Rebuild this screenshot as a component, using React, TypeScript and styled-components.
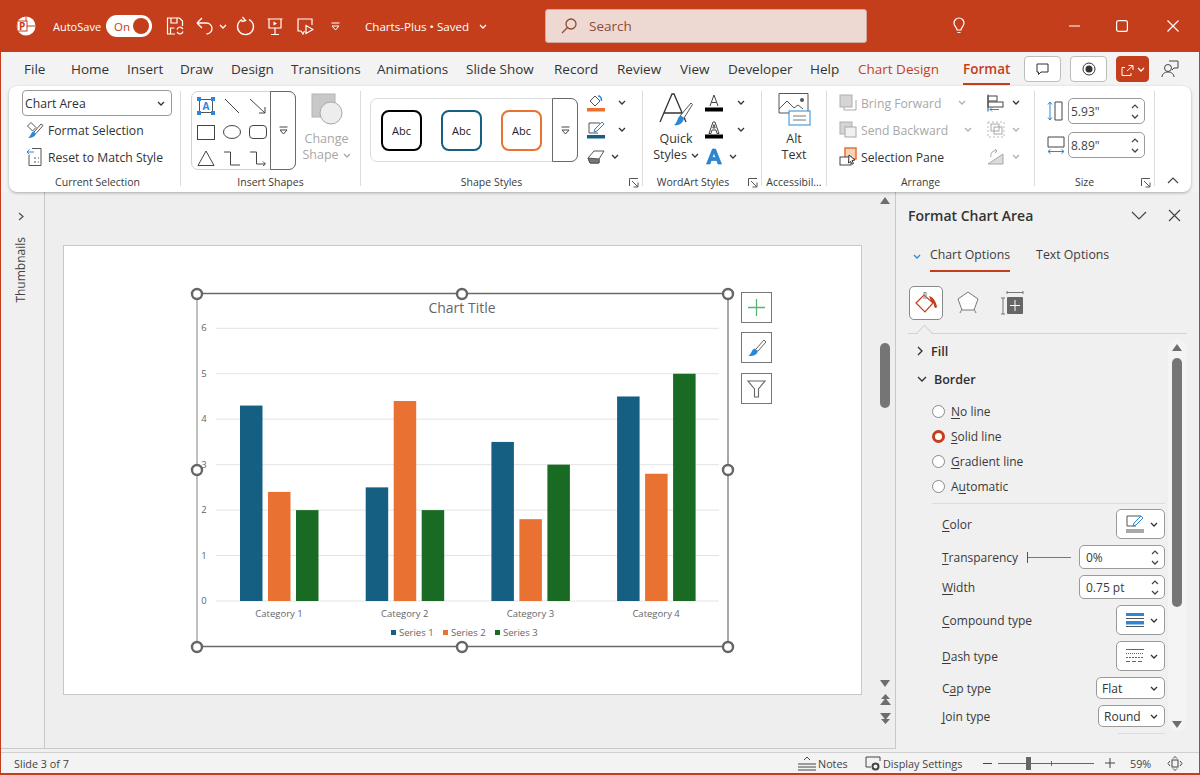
import React from "react";
import styled, { createGlobalStyle } from "styled-components";

const RED = "#c43e1c";
const BLUE = "#2b88d8";
const ORANGE = "#e97132";
const TEAL = "#156082";
const GREEN = "#196b24";

const GlobalStyle = createGlobalStyle`
  html, body { margin: 0; padding: 0; }
  body { font-family: "Open Sans", "Noto Sans", sans-serif; color: #2f2f2f; }
  * { box-sizing: border-box; }
  svg { flex: none; }
`;

const Window = styled.div`
  width: 1200px;
  height: 775px;
  overflow: hidden;
  display: flex;
  flex-direction: column;
  background: #f3f3f3;
`;

const TitleBar = styled.div`
  height: 52px;
  flex: none;
  display: flex;
  align-items: center;
  background: ${RED};
  color: #fff;
`;

const Slot = styled.div<{ $w: number; $c?: string }>`
  width: ${(p) => p.$w}px;
  flex: none;
  display: flex;
  align-items: center;
  justify-content: center;
  color: ${(p) => p.$c ?? "inherit"};
`;

const AutoSave = styled.div`
  width: 54px;
  flex: none;
  padding-left: 1px;
  font-size: 11px;
`;

const Toggle = styled.div`
  width: 46px;
  height: 22px;
  flex: none;
  margin-right: 6px;
  padding: 0 3px 0 8px;
  border-radius: 11px;
  background: #fff;
  color: ${RED};
  font-size: 11.5px;
  display: flex;
  align-items: center;
  justify-content: space-between;
  &::after {
    content: "";
    width: 16px;
    height: 16px;
    border-radius: 50%;
    background: ${RED};
  }
`;

const DocTitle = styled.div`
  width: 195px;
  flex: none;
  padding-left: 15px;
  font-size: 11.6px;
  display: flex;
  align-items: center;
  gap: 10px;
`;

const Search = styled.div`
  width: 322px;
  height: 34px;
  flex: none;
  border: 1px solid #d3a79b;
  border-radius: 3px;
  background: #eed8d2;
  color: #8f4a36;
  font-size: 13.5px;
  display: flex;
  align-items: center;
  gap: 12px;
  padding-left: 15px;
`;

const Spacer = styled.div`
  flex: 1;
`;

const Body = styled.div`
  flex: 1;
  min-height: 0;
  display: flex;
  flex-direction: column;
  border: solid ${RED};
  border-width: 0 1px 2px;
`;

const TabRow = styled.div`
  height: 34px;
  flex: none;
  display: flex;
  align-items: center;
  padding-left: 23px;
`;

const Tab = styled.div<{ $w: number; $accent?: boolean; $active?: boolean }>`
  width: ${(p) => p.$w}px;
  flex: none;
  height: 34px;
  display: flex;
  align-items: center;
  font-size: 13.5px;
  white-space: nowrap;
  color: ${(p) => (p.$accent ? RED : "#333")};
  font-weight: ${(p) => (p.$active ? 600 : 400)};
`;

const ActiveLabel = styled.span`
  position: relative;
  &::after {
    content: "";
    position: absolute;
    left: 0;
    right: 0;
    bottom: -7px;
    height: 2px;
    background: ${RED};
  }
`;

const TopButton = styled.div<{ $w: number; $filled?: boolean }>`
  width: ${(p) => p.$w}px;
  height: 26px;
  flex: none;
  margin-right: 9px;
  border: 1px solid ${(p) => (p.$filled ? RED : "#bdbdbd")};
  border-radius: 4px;
  background: ${(p) => (p.$filled ? RED : "#fff")};
  color: ${(p) => (p.$filled ? "#fff" : "#333")};
  display: flex;
  align-items: center;
  justify-content: center;
  gap: 3px;
`;

const Ribbon = styled.div`
  height: 106px;
  flex: none;
  margin: 0 8px;
  position: relative;
  z-index: 2;
  display: flex;
  border-radius: 8px;
  background: #fff;
  box-shadow: 0 1px 3px rgba(0, 0, 0, 0.3);
  font-size: 12.2px;
`;

const Sep = styled.div`
  width: 1px;
  flex: none;
  margin: 5px 0 6px;
  background: #dcdcdc;
`;

const Group = styled.div<{ $w: number }>`
  width: ${(p) => p.$w}px;
  flex: none;
  position: relative;
  display: flex;
  flex-direction: column;
`;

const GroupBody = styled.div<{ $pl: number }>`
  flex: 1;
  display: flex;
  padding: 4px 0 0 ${(p) => p.$pl}px;
`;

const GroupLabel = styled.div<{ $pl?: number; $pr?: number }>`
  height: 16px;
  margin-bottom: 2px;
  padding: 0 ${(p) => p.$pr ?? 0}px 0 ${(p) => p.$pl ?? 0}px;
  font-size: 10.5px;
  line-height: 16px;
  text-align: center;
  white-space: nowrap;
  color: #3a3a3a;
`;

const Launcher = styled.div`
  position: absolute;
  right: 3px;
  bottom: 4px;
  color: #555;
  display: flex;
`;

const Combo = styled.div`
  width: 150px;
  height: 26px;
  padding: 0 6px 0 2px;
  border: 1px solid #9a9a9a;
  border-radius: 4px;
  display: flex;
  align-items: center;
  justify-content: space-between;
`;

const Stack = styled.div`
  display: flex;
  flex-direction: column;
`;

const RowStack = styled(Stack)<{ $ml?: number }>`
  margin: -1px 0 0 ${(p) => p.$ml ?? 0}px;
`;

const CmdRow = styled.div<{ $pl?: number; $disabled?: boolean; $gap?: number }>`
  height: 27px;
  display: flex;
  align-items: center;
  gap: ${(p) => p.$gap ?? 4}px;
  padding-left: ${(p) => p.$pl ?? 0}px;
  white-space: nowrap;
  color: ${(p) => (p.$disabled ? "#a8a8a8" : "#333")};
`;

const CmdText = styled.span<{ $w?: number }>`
  width: ${(p) => (p.$w ? `${p.$w}px` : "auto")};
  padding-top: 2px;
`;

const ShapeGallery = styled.div`
  width: 105px;
  height: 79px;
  flex: none;
  margin-top: 1px;
  display: flex;
  border: 1px solid #d2d2d2;
  border-radius: 7px;
`;

const ShapeGrid = styled.div`
  width: 78px;
  padding: 1px 0 0 1px;
  display: grid;
  grid-template-columns: repeat(3, 26px);
  grid-auto-rows: 26px;
  justify-items: center;
  align-items: center;
  color: #444;
`;

const Expander = styled.div<{ $w: number }>`
  width: ${(p) => p.$w}px;
  flex: none;
  align-self: stretch;
  margin: -1px -1px -1px auto;
  border: 1px solid #6a6a6a;
  border-radius: 0 7px 7px 0;
  display: flex;
  align-items: center;
  justify-content: center;
  color: #444;
`;

const BigButton = styled.div<{ $w: number; $ml?: number; $disabled?: boolean }>`
  width: ${(p) => p.$w}px;
  flex: none;
  margin-left: ${(p) => p.$ml ?? 0}px;
  padding-top: 1px;
  display: flex;
  flex-direction: column;
  align-items: center;
  line-height: 16px;
  color: ${(p) => (p.$disabled ? "#a8a8a8" : "#333")};
  font-size: 12.5px;
`;

const BigIcon = styled.div`
  height: 36px;
  margin-bottom: 4px;
  display: flex;
  align-items: center;
`;

const BigLine = styled.div`
  display: flex;
  align-items: center;
  gap: 4px;
  white-space: nowrap;
`;

const StyleGallery = styled.div`
  width: 208px;
  height: 64px;
  flex: none;
  margin-top: 8px;
  padding-left: 10px;
  display: flex;
  align-items: center;
  border: 1px solid #dcdcdc;
  border-radius: 7px;
`;

const StyleChip = styled.div<{ $c: string }>`
  width: 41px;
  height: 41px;
  flex: none;
  border: 2px solid ${(p) => p.$c};
  border-radius: 8px;
  display: flex;
  align-items: center;
  justify-content: center;
  font-size: 11px;
  color: #222;
  & + & {
    margin-left: 19px;
  }
`;

const SpinBox = styled.div<{ $w: number; $h: number }>`
  width: ${(p) => p.$w}px;
  height: ${(p) => p.$h}px;
  flex: none;
  padding: 0 5px 0 ${(p) => (p.$h > 25 ? 2 : 6)}px;
  border: 1px solid #9a9a9a;
  border-radius: 5px;
  background: #fff;
  display: flex;
  align-items: center;
  justify-content: space-between;
  font-size: 12px;
`;

const SpinArrows = styled.div`
  display: flex;
  flex-direction: column;
  gap: 5px;
  color: #444;
`;

const SizeStack = styled(Stack)`
  margin-top: 8px;
`;

const SizeRow = styled.div`
  display: flex;
  align-items: center;
  gap: 3px;
  margin-bottom: 8px;
  color: #444;
`;

const Collapse = styled.div`
  flex: 1;
  display: flex;
  align-items: flex-end;
  justify-content: center;
  padding: 0 0 8px;
  color: #444;
`;

const Workspace = styled.div`
  flex: 1;
  min-height: 0;
  display: flex;
  background: #f0f0f0;
`;

const Rail = styled.div`
  width: 44px;
  height: 557px;
  flex: none;
  padding: 20px 4px 0 0;
  display: flex;
  flex-direction: column;
  align-items: center;
  gap: 16px;
  border: solid #c8c8c8;
  border-width: 0 1px 1px 0;
  color: #555;
`;

const RailLabel = styled.div`
  writing-mode: vertical-rl;
  transform: rotate(180deg);
  font-size: 12px;
  color: #444;
`;

const Canvas = styled.div`
  width: 851px;
  height: 557px;
  flex: none;
  display: flex;
  background: #eeeeee;
  border: solid #c8c8c8;
  border-width: 0 1px 1px 0;
`;

const SlideArea = styled.div`
  flex: 1;
  padding: 53px 0 0 18px;
`;

const Slide = styled.div`
  width: 799px;
  height: 450px;
  position: relative;
  background: #fff;
  border: 1px solid #c8c8c8;
`;

const ChartFrame = styled.svg`
  position: absolute;
  left: 126px;
  top: 40px;
`;

const ChartButton = styled.div<{ $top: number }>`
  position: absolute;
  left: 677px;
  top: ${(p) => p.$top}px;
  width: 31px;
  height: 31px;
  border: 1px solid #777;
  background: #fff;
  display: flex;
  align-items: center;
  justify-content: center;
`;

const CanvasScroll = styled.div`
  width: 20px;
  flex: none;
  display: flex;
  flex-direction: column;
  align-items: center;
  color: #6e6e6e;
`;

const ScrollThumb = styled.div<{ $h: number; $mt: number }>`
  width: 10px;
  height: ${(p) => p.$h}px;
  flex: none;
  margin-top: ${(p) => p.$mt}px;
  border-radius: 5px;
  background: #757575;
`;

const ScrollArrow = styled.svg<{ $mt: number }>`
  display: block;
  margin-top: ${(p) => p.$mt}px;
`;

const Pane = styled.div`
  flex: 1;
  display: flex;
  flex-direction: column;
  background: #f0f0f0;
`;

const PaneHeader = styled.div`
  height: 48px;
  flex: none;
  padding: 0 0 2px 12px;
  display: flex;
  align-items: center;
  font-size: 14px;
  font-weight: 600;
  color: #333;
`;

const PaneIconSlot = styled.div<{ $w: number; $ml?: string }>`
  width: ${(p) => p.$w}px;
  margin-left: ${(p) => p.$ml ?? "0"};
  display: flex;
  justify-content: center;
  color: #444;
`;

const PaneTabs = styled.div`
  height: 33px;
  flex: none;
  padding-left: 17px;
  display: flex;
  align-items: flex-start;
  font-size: 12.3px;
`;

const PaneTab = styled.div<{ $active?: boolean; $ml?: number }>`
  height: 32px;
  margin-left: ${(p) => p.$ml ?? 0}px;
  padding-top: 6px;
  white-space: nowrap;
  color: #3d3d3d;
  border-bottom: 2px solid ${(p) => (p.$active ? RED : "transparent")};
`;

const PaneChevron = styled.div`
  width: 17px;
  padding-top: 14px;
  display: flex;
  align-items: flex-start;
`;

const PaneIcons = styled.div`
  height: 61px;
  flex: none;
  margin: 0 12px;
  padding: 13px 0 0 1px;
  display: flex;
  align-items: flex-start;
  position: relative;
  border-bottom: 1px solid #d4d4d4;
  &::after {
    content: "";
    position: absolute;
    left: 11px;
    bottom: -5px;
    width: 10px;
    height: 10px;
    background: #f0f0f0;
    border: solid #d4d4d4;
    border-width: 1px 0 0 1px;
    transform: rotate(45deg);
  }
`;

const FillTab = styled.div`
  width: 34px;
  height: 34px;
  flex: none;
  border: 1px solid #8a8a8a;
  border-radius: 5px;
  background: #fff;
  display: flex;
  align-items: center;
  justify-content: center;
`;

const PlainTab = styled.div<{ $w: number }>`
  width: ${(p) => p.$w}px;
  height: 34px;
  flex: none;
  display: flex;
  align-items: center;
  justify-content: center;
`;

const PaneBody = styled.div`
  flex: 1;
  min-height: 0;
  display: flex;
  overflow: hidden;
`;

const PaneContent = styled.div`
  width: 272px;
  flex: none;
  padding: 3px 3px 0 12px;
  font-size: 12px;
  color: #3a3a3a;
`;

const SectionHead = styled.div`
  height: 28px;
  padding-left: 9px;
  display: flex;
  align-items: center;
  gap: 7px;
  font-weight: 600;
  font-size: 12.5px;
  color: #2f2f2f;
`;

const RadioList = styled.div`
  padding: 6px 0 0 24px;
`;

const RadioRow = styled.div`
  height: 25px;
  display: flex;
  align-items: center;
  gap: 6px;
`;

const RadioDot = styled.div<{ $on?: boolean }>`
  width: 13px;
  height: 13px;
  flex: none;
  border-radius: 50%;
  background: #fff;
  border: ${(p) => (p.$on ? `3.5px solid ${RED}` : "1px solid #8a8a8a")};
`;

const Key = styled.span`
  text-decoration: underline;
  text-underline-offset: 2px;
`;

const Divider = styled.div`
  height: 1px;
  margin: 4px 0 5px 24px;
  background: #dcdcdc;
`;

const PropRows = styled.div`
  padding-left: 34px;
  display: flex;
  flex-direction: column;
  gap: 6px;
`;

const PropRow = styled.div`
  display: flex;
  align-items: center;
  justify-content: space-between;
`;

const PropLabel = styled.span`
  padding-top: 1px;
`;

const PickButton = styled.div<{ $w: number; $h: number; $pl?: number }>`
  width: ${(p) => p.$w}px;
  height: ${(p) => p.$h}px;
  flex: none;
  padding: 0 6px 0 ${(p) => p.$pl ?? 9}px;
  border: 1px solid #9a9a9a;
  border-radius: 5px;
  background: #fff;
  display: flex;
  align-items: center;
  justify-content: space-between;
  color: #333;
`;

const SliderGroup = styled.div`
  display: flex;
  align-items: center;
  gap: 8px;
`;

const NextCtl = styled.div`
  width: 47px;
  height: 6px;
  margin: 0 0 0 auto;
  border-top: 1px solid #dcdcdc;
`;

const PaneScroll = styled.div`
  width: 18px;
  height: 393px;
  flex: none;
  margin-top: 5px;
  padding-top: 3px;
  border-radius: 9px;
  background: #f4f4f4;
  display: flex;
  flex-direction: column;
  align-items: center;
  color: #6e6e6e;
`;

const StatusBar = styled.div`
  height: 21px;
  flex: none;
  padding-left: 13px;
  border-top: 1px solid #d0d0d0;
  display: flex;
  align-items: center;
  font-size: 10.8px;
  color: #444;
  background: #f3f3f3;
`;

const StatusItem = styled.div<{ $w: number; $pl?: number }>`
  width: ${(p) => p.$w}px;
  flex: none;
  padding-left: ${(p) => p.$pl ?? 0}px;
  display: flex;
  align-items: center;
  gap: 2px;
  white-space: nowrap;
`;

const ZoomTrack = styled.div`
  width: 96px;
  height: 1px;
  flex: none;
  margin: 0 11px 0 6px;
  position: relative;
  background: #666;
  &::before {
    content: "";
    position: absolute;
    left: 28px;
    top: -6px;
    width: 5px;
    height: 13px;
    background: #666;
  }
  &::after {
    content: "";
    position: absolute;
    left: 53px;
    top: -2px;
    width: 1px;
    height: 5px;
    background: #666;
  }
`;

type IcProps = { w: number; h: number; children?: React.ReactNode; sw?: number };

const Ic = ({ w, h, sw = 1, children }: IcProps) => (
  <svg width={w} height={h} viewBox={`0 0 ${w} ${h}`} fill="none" stroke="currentColor" strokeWidth={sw}>
    {children}
  </svg>
);

const Chev = ({ c = "#333" }: { c?: string }) => (
  <svg width="8" height="5" viewBox="0 0 8 5" fill="none" stroke={c} strokeWidth="1.3">
    <path d="M1 1l3 3 3-3" />
  </svg>
);

const Up = () => (
  <svg width="8" height="5" viewBox="0 0 8 5" fill="none" stroke="currentColor" strokeWidth="1.2">
    <path d="M1 4l3-3 3 3" />
  </svg>
);

const Corner = () => (
  <Ic w={10} h={10}>
    <path d="M.5 8V.5H9M3 3l5.5 5.5M4.5 9H9V4.5" />
  </Ic>
);

const MoreGlyph = () => (
  <Ic w={9} h={9}>
    <path d="M.5 1h8" />
    <path d="M1 4h7L4.5 8z" />
  </Ic>
);

const Logo = () => (
  <svg width="20" height="20" viewBox="0 0 20 20">
    <circle cx="10" cy="10" r="9.5" fill="#fff" />
    <path d="M10 .5V10h9.500" fill="none" stroke={RED} strokeWidth="1" />
    <rect x="1" y="5" width="10" height="10" fill="#fff" stroke={RED} strokeWidth="1" />
    <text x="3" y="13.5" fontSize="10" fontWeight="700" fontFamily="Open Sans" fill={RED}>P</text>
  </svg>
);

const ArrowUp = ({ mt }: { mt: number }) => (
  <ScrollArrow $mt={mt} width="10" height="7" viewBox="0 0 10 7"><path d="M5 0l5 7H0z" fill="currentColor" /></ScrollArrow>
);

const ArrowDown = ({ mt }: { mt: number }) => (
  <ScrollArrow $mt={mt} width="10" height="7" viewBox="0 0 10 7"><path d="M5 7L0 0h10z" fill="currentColor" /></ScrollArrow>
);

const shapes = [
  <Ic key="t" w={18} h={18}><rect x="2.5" y="2.5" width="13" height="13" stroke="#555" /><path d="M0 0h4v4H0zM14 0h4v4h-4zM0 14h4v4H0zM14 14h4v4h-4z" fill={BLUE} stroke="none" /><text x="5.5" y="13" fontSize="10" fontWeight="700" fill={BLUE} stroke="none" fontFamily="Open Sans">A</text></Ic>,
  <Ic key="l" w={16} h={16}><path d="M1 1l14 14" /></Ic>,
  <Ic key="a" w={18} h={16}><path d="M1 1l15 14M10 15h6V9" /></Ic>,
  <Ic key="r" w={18} h={15}><rect x=".5" y=".5" width="17" height="14" /></Ic>,
  <Ic key="e" w={18} h={14}><ellipse cx="9" cy="7" rx="8.5" ry="6.5" /></Ic>,
  <Ic key="rr" w={18} h={14}><rect x=".5" y=".5" width="17" height="13" rx="3.5" /></Ic>,
  <Ic key="tr" w={18} h={16}><path d="M9 1l8 14.5H1z" /></Ic>,
  <Ic key="el" w={18} h={15}><path d="M1 1h6.5v13H17" /></Ic>,
  <Ic key="ea" w={18} h={15}><path d="M1 1h6.5v12H16M14 10.5l2.500 2.500-2.500 2" /></Ic>,
];

const categories = ["Category 1", "Category 2", "Category 3", "Category 4"];
const values = [
  [4.3, 2.4, 2],
  [2.5, 4.4, 2],
  [3.5, 1.8, 3],
  [4.5, 2.8, 5],
];
const seriesColors = [TEAL, ORANGE, GREEN];
const yOf = (v: number) => 601 - 45.45 * v;

const Chart = () => (
  <ChartFrame width={545} height={368} viewBox="190 286 545 368">
    {[0, 1, 2, 3, 4, 5, 6].map((v) => (
      <g key={v}>
        <line x1="216" x2="719" y1={yOf(v)} y2={yOf(v)} stroke="#e3e3e3" strokeWidth="1" />
        <text x="204" y={yOf(v) + 3} fontSize="9.5" textAnchor="middle" fill="#666" fontFamily="Open Sans">{v}</text>
      </g>
    ))}
    {values.map((set, c) =>
      set.map((v, s) => (
        <rect key={`${c}-${s}`} x={240 + c * 125.7 + s * 28} y={yOf(v)} width={22.5} height={45.45 * v} fill={seriesColors[s]} />
      ))
    )}
    {categories.map((name, c) => (
      <text key={name} x={279 + c * 125.7} y={617} fontSize="9.5" textAnchor="middle" fill="#666" fontFamily="Open Sans">{name}</text>
    ))}
    <text x="462" y="313" fontSize="14" textAnchor="middle" fill="#666" fontFamily="Open Sans">Chart Title</text>
    {[0, 1, 2].map((s) => (
      <g key={s}>
        <rect x={391 + s * 52} y={630} width={5} height={5} fill={seriesColors[s]} />
        <text x={399 + s * 52} y={636} fontSize="9.5" fill="#666" fontFamily="Open Sans">{`Series ${s + 1}`}</text>
      </g>
    ))}
    <path d="M197 293.5H728M197 646.5H728" stroke="#6a6a6a" strokeWidth="1.5" />
    <path d="M197 293V647" stroke="#ababab" strokeWidth="1.5" />
    <path d="M728 293V647" stroke="#8a8a8a" strokeWidth="1.5" />
    {[[197, 294], [462, 294], [728, 294], [197, 470], [728, 470], [197, 647], [462, 647], [728, 647]].map(([x, y]) => (
      <circle key={`${x}-${y}`} cx={x} cy={y} r="5" fill="#fff" stroke="#666" strokeWidth="2.4" />
    ))}
  </ChartFrame>
);

export default function App() {
  return (
    <Window>
      <GlobalStyle />
      <TitleBar>
        <Slot $w={52}><Logo /></Slot>
        <AutoSave>AutoSave</AutoSave>
        <Toggle>On</Toggle>
        <Slot $w={34}>
          <Ic w={18} h={18} sw={1.2}>
            <path d="M9 17H1.5V1h12l3 3v5M5 1v5h6V1M4.5 17v-6h4" />
            <path d="M11 12.5a3 3 0 015-1.5l1 1M17 14.500a3 3 0 01-5 1.500l-1-1" />
          </Ic>
        </Slot>
        <Slot $w={24}>
          <Ic w={17} h={19} sw={1.3}><path d="M1 6h9.500a5.500 5.500 0 010 11M1 6l5-5M1 6l5 5" /></Ic>
        </Slot>
        <Slot $w={14}><Chev c="#fff" /></Slot>
        <Slot $w={30}>
          <Ic w={19} h={20} sw={1.3}><path d="M6 3.500a8 8 0 107 0M6.500 1l3 3.500-4 1" /></Ic>
        </Slot>
        <Slot $w={30}>
          <Ic w={16} h={17} sw={1.2}><path d="M.5 1h15M2 1v9h12V1M8 10v6M4 16.500h8" /><path d="M6.500 3.500L10 5.500l-3.500 2z" fill="#fff" stroke="none" /></Ic>
        </Slot>
        <Slot $w={30}>
          <Ic w={17} h={17} sw={1.2}><path d="M4 13H1V1h14v6" /><path d="M4 13l2 3 1.500-3M9 7.500l7 4-7 4z" /></Ic>
        </Slot>
        <Slot $w={30}><MoreGlyph /></Slot>
        <DocTitle>
          Charts-Plus • Saved
          <Chev c="#fff" />
        </DocTitle>
        <Search>
          <Ic w={16} h={16} sw={1.3}>
            <circle cx="10" cy="6" r="5" />
            <path d="M6.500 9.500L1 15" />
          </Ic>
          Search
        </Search>
        <Spacer />
        <Slot $w={40}>
          <Ic w={12} h={18} sw={1.2}><path d="M4 13c0-3-3-3.500-3-7a5 5 0 0110 0c0 3.500-3 4-3 7zM4.500 15.500h3" /></Ic>
        </Slot>
        <Spacer />
        <Slot $w={47}><Ic w={11} h={2}><path d="M0 1h11" /></Ic></Slot>
        <Slot $w={48}><Ic w={12} h={12} sw={1.2}><rect x=".6" y=".6" width="10.8" height="10.8" rx="2" /></Ic></Slot>
        <Slot $w={54}><Ic w={12} h={12} sw={1.2}><path d="M.5.5l11 11M11.500.5l-11 11" /></Ic></Slot>
      </TitleBar>

      <Body>
        <TabRow>
          <Tab $w={47}>File</Tab>
          <Tab $w={56}>Home</Tab>
          <Tab $w={53}>Insert</Tab>
          <Tab $w={51}>Draw</Tab>
          <Tab $w={60}>Design</Tab>
          <Tab $w={86}>Transitions</Tab>
          <Tab $w={89}>Animations</Tab>
          <Tab $w={88}>Slide Show</Tab>
          <Tab $w={63}>Record</Tab>
          <Tab $w={63}>Review</Tab>
          <Tab $w={48}>View</Tab>
          <Tab $w={82}>Developer</Tab>
          <Tab $w={48}>Help</Tab>
          <Tab $w={105} $accent>Chart Design</Tab>
          <Tab $w={61} $accent $active><ActiveLabel>Format</ActiveLabel></Tab>
          <TopButton $w={37}>
            <Ic w={13} h={13}><path d="M1 1h11v8H5l-2.500 2.500V9H1z" /></Ic>
          </TopButton>
          <TopButton $w={37}>
            <Ic w={14} h={14}><circle cx="7" cy="7" r="6" /><circle cx="7" cy="7" r="3.5" fill="#333" stroke="none" /></Ic>
          </TopButton>
          <TopButton $w={33} $filled>
            <Ic w={13} h={13}><path d="M7.500 2.500H12V7M12 2.500L6 8M4 4.500H1v8h9V10" /></Ic>
            <Chev c="#fff" />
          </TopButton>
          <Slot $w={24} $c="#444">
            <Ic w={18} h={18}><circle cx="7" cy="8" r="3.5" /><path d="M1 17c0-3 2.500-5 6-5s6 2 6 5M8 1h9v7h-4l-2 2" /></Ic>
          </Slot>
        </TabRow>

        <Ribbon>
          <Group $w={171}>
            <GroupBody $pl={13}>
              <Stack>
                <Combo>Chart Area<Chev /></Combo>
                <CmdRow $pl={4}>
                  <Ic w={18} h={18}>
                    <path d="M1.500 5L5 1.500l5 5-3.500 3.500z" stroke="#555" />
                    <path d="M8 11l7-8 2 1.500-7 8" stroke="#555" />
                    <path d="M2 17c3.500 0 7-1 8-4.500L7.500 10.500C5 11 5 15 2 17z" fill={BLUE} stroke="none" />
                  </Ic>
                  <CmdText>Format Selection</CmdText>
                </CmdRow>
                <CmdRow $pl={4}>
                  <Ic w={18} h={20}><path d="M6 1.500h9v17H3V8" stroke="#555" /><path d="M1 5h7M3.500 2.500L1 5l2.500 2.500" stroke={BLUE} /><path d="M8 11h2M12 11h1M8 15h2M12 15h1" stroke="#555" /></Ic>
                  <CmdText>Reset to Match Style</CmdText>
                </CmdRow>
              </Stack>
            </GroupBody>
            <GroupLabel $pl={6}>Current Selection</GroupLabel>
          </Group>
          <Sep />

          <Group $w={179}>
            <GroupBody $pl={10}>
              <ShapeGallery>
                <ShapeGrid>{shapes}</ShapeGrid>
                <Expander $w={26}><MoreGlyph /></Expander>
              </ShapeGallery>
              <BigButton $w={43} $ml={9} $disabled>
                <BigIcon>
                  <svg width="32" height="32" viewBox="0 0 32 32">
                    <rect x="1" y="1" width="23" height="23" fill="#c8c8c8" stroke="#b4b4b4" />
                    <circle cx="20" cy="20" r="11" fill="#ededed" stroke="#a8a8a8" />
                  </svg>
                </BigIcon>
                <BigLine>Change</BigLine>
                <BigLine>Shape<Chev c="#a8a8a8" /></BigLine>
              </BigButton>
            </GroupBody>
            <GroupLabel>Insert Shapes</GroupLabel>
          </Group>
          <Sep />

          <Group $w={281}>
            <GroupBody $pl={9}>
              <StyleGallery>
                <StyleChip $c="#000">Abc</StyleChip>
                <StyleChip $c={TEAL}>Abc</StyleChip>
                <StyleChip $c={ORANGE}>Abc</StyleChip>
                <Expander $w={26}><MoreGlyph /></Expander>
              </StyleGallery>
              <RowStack $ml={9}>
                <CmdRow $gap={13}>
                  <Ic w={18} h={18}>
                    <path d="M3 7l5-5 5 5-5 5z" stroke="#555" />
                    <path d="M11 2c2 0 3.500 2 3.500 5" stroke={BLUE} strokeWidth="1.5" />
                    <rect x="0" y="14" width="18" height="3.5" fill={ORANGE} stroke="none" />
                  </Ic>
                  <Chev />
                </CmdRow>
                <CmdRow $gap={13}>
                  <Ic w={18} h={18}>
                    <path d="M13 2H2v10h9" stroke="#555" />
                    <path d="M7 11l1-3 7-7 2 2-7 7z" stroke={BLUE} fill="#fff" />
                    <rect x="0" y="14" width="18" height="3.5" fill={TEAL} stroke="none" />
                  </Ic>
                  <Chev />
                </CmdRow>
                <CmdRow $gap={6}>
                  <Ic w={18} h={16}>
                    <path d="M1 9l6-7h10l-5 8v4H3z" stroke="#555" />
                    <path d="M1 9l2 5h9v-4z" fill="#777" stroke="#555" />
                  </Ic>
                  <Chev />
                </CmdRow>
              </RowStack>
            </GroupBody>
            <GroupLabel $pr={20}>Shape Styles</GroupLabel>
            <Launcher><Corner /></Launcher>
          </Group>
          <Sep />

          <Group $w={118}>
            <GroupBody $pl={12}>
              <BigButton $w={42}>
                <BigIcon>
                  <svg width="36" height="34" viewBox="0 0 36 34" fill="none">
                    <path d="M2 30L14 2h2l12 28M6 21h20" stroke="#333" strokeWidth="1.3" />
                    <path d="M22 24L33 11l1.500 1.500L26 26" stroke="#555" fill="#fff" />
                    <path d="M16 33c4 1 9-1 10-7l-3-2.500c-4 1-3 7-7 9.500z" fill={BLUE} />
                  </svg>
                </BigIcon>
                <BigLine>Quick</BigLine>
                <BigLine>Styles<Chev /></BigLine>
              </BigButton>
              <RowStack $ml={8}>
                <CmdRow $gap={14}>
                  <svg width="18" height="18" viewBox="0 0 18 18" fill="none">
                    <path d="M5 12L9 1l4 11M6.500 8.500h5" stroke="#444" />
                    <rect x="0" y="13.5" width="18" height="4" fill="#000" />
                  </svg>
                  <Chev />
                </CmdRow>
                <CmdRow $gap={14}>
                  <svg width="18" height="18" viewBox="0 0 18 18" fill="none">
                    <path d="M4 12.500L8 1h2l4 11.500h-2L11 9H7l-1 3.500zM7.800 7h2.400L9 3.500z" stroke="#444" />
                    <rect x="0" y="13.5" width="18" height="4" fill="#000" />
                  </svg>
                  <Chev />
                </CmdRow>
                <CmdRow $gap={6}>
                  <svg width="18" height="17" viewBox="0 0 18 17">
                    <path d="M1.500 16L7.500 1h3l6 15h-3.500l-1.200-3.500H6.200L5 16zM7.300 9.500h3.400L9 4.500z" fill={BLUE} stroke="#1a6bb0" strokeWidth=".6" />
                  </svg>
                  <Chev />
                </CmdRow>
              </RowStack>
            </GroupBody>
            <GroupLabel $pr={18}>WordArt Styles</GroupLabel>
            <Launcher><Corner /></Launcher>
          </Group>
          <Sep />

          <Group $w={64}>
            <GroupBody $pl={0}>
              <BigButton $w={64}>
                <BigIcon>
                  <svg width="33" height="34" viewBox="0 0 33 34" fill="none">
                    <path d="M1 1.500h29V21H1z" stroke="#555" />
                    <path d="M1 17l8-8 7 7 4-3 5 4" stroke="#555" />
                    <circle cx="24" cy="8" r="2" fill="#555" />
                    <rect x="11" y="19" width="21" height="14" fill="#fff" stroke={BLUE} />
                    <path d="M15 24h13M15 28h13" stroke="#777" />
                  </svg>
                </BigIcon>
                <BigLine>Alt</BigLine>
                <BigLine>Text</BigLine>
              </BigButton>
            </GroupBody>
            <GroupLabel>Accessibil...</GroupLabel>
          </Group>
          <Sep />

          <Group $w={207}>
            <GroupBody $pl={12}>
              <RowStack>
                <CmdRow $disabled>
                  <svg width="18" height="17" viewBox="0 0 18 17" fill="none">
                    <path d="M5 6v10h12V6" stroke="#a8a8a8" />
                    <rect x="1" y="1" width="12" height="12" fill="#d4d4d4" stroke="#b0b0b0" />
                  </svg>
                  <CmdText $w={93}>Bring Forward</CmdText>
                  <Chev c="#b0b0b0" />
                </CmdRow>
                <CmdRow $disabled>
                  <svg width="18" height="17" viewBox="0 0 18 17" fill="none">
                    <rect x="1" y="1" width="12" height="12" fill="#d4d4d4" stroke="#b0b0b0" />
                    <rect x="6" y="6" width="11" height="10" fill="#f0f0f0" stroke="#a8a8a8" />
                  </svg>
                  <CmdText $w={99}>Send Backward</CmdText>
                  <Chev c="#b0b0b0" />
                </CmdRow>
                <CmdRow>
                  <svg width="18" height="19" viewBox="0 0 18 19" fill="none">
                    <rect x="6" y="1" width="11" height="11" fill="#f7d2b8" stroke={ORANGE} strokeWidth="1.5" />
                    <rect x="1" y="10" width="11" height="8" fill="#fff" stroke="#444" />
                    <path d="M10 8l6 5-3 .5 1.500 3-1.500.7-1.500-3-2 2z" fill="#fff" stroke="#333" />
                  </svg>
                  <CmdText>Selection Pane</CmdText>
                </CmdRow>
              </RowStack>
              <RowStack $ml={15}>
                <CmdRow $gap={7}>
                  <svg width="18" height="18" viewBox="0 0 18 18" fill="none">
                    <path d="M1 .5v17" stroke="#444" />
                    <rect x="1" y="2" width="9" height="5" stroke="#444" />
                    <rect x="1" y="8" width="15" height="5" stroke="#444" />
                    <path d="M3 15.500h9M3 15.500l2-2M3 15.500l2 2" stroke={BLUE} />
                  </svg>
                  <Chev />
                </CmdRow>
                <CmdRow $gap={7}>
                  <svg width="18" height="17" viewBox="0 0 18 17" fill="none">
                    <path d="M1 1h16v15H1z" stroke="#bbb" strokeDasharray="2 2" />
                    <rect x="4" y="3" width="8" height="7" stroke="#a8a8a8" />
                    <rect x="7" y="6" width="8" height="7" stroke="#a8a8a8" />
                  </svg>
                  <Chev c="#b0b0b0" />
                </CmdRow>
                <CmdRow $gap={7}>
                  <svg width="18" height="17" viewBox="0 0 18 17" fill="none">
                    <path d="M1 16L16 6v10z" fill="#dcdcdc" stroke="#a8a8a8" />
                    <path d="M4 9c-1-4 2-7 6-6M8 1l2 2-2 2" stroke="#a8a8a8" />
                  </svg>
                  <Chev c="#b0b0b0" />
                </CmdRow>
              </RowStack>
            </GroupBody>
            <GroupLabel $pr={20}>Arrange</GroupLabel>
          </Group>
          <Sep />

          <Group $w={119}>
            <GroupBody $pl={12}>
              <SizeStack>
                <SizeRow>
                  <svg width="18" height="20" viewBox="0 0 18 20" fill="none">
                    <path d="M3 1v18M1 3.500L3 1l2 2.500M1 16.500L3 19l2-2.500" stroke={BLUE} />
                    <path d="M8 1h7v18H8z" stroke="#444" />
                  </svg>
                  <SpinBox $w={77} $h={26}>
                    5.93"
                    <SpinArrows><Up /><Chev c="#444" /></SpinArrows>
                  </SpinBox>
                </SizeRow>
                <SizeRow>
                  <svg width="18" height="20" viewBox="0 0 18 20" fill="none">
                    <path d="M1 2h16v10H1z" stroke="#444" />
                    <path d="M1 16.500h16M3.500 14.500L1 16.500l2.500 2M14.500 14.500l2.500 2-2.500 2" stroke={BLUE} />
                  </svg>
                  <SpinBox $w={77} $h={26}>
                    8.89"
                    <SpinArrows><Up /><Chev c="#444" /></SpinArrows>
                  </SpinBox>
                </SizeRow>
              </SizeStack>
            </GroupBody>
            <GroupLabel $pr={20}>Size</GroupLabel>
            <Launcher><Corner /></Launcher>
          </Group>
          <Sep />
          <Collapse>
            <Ic w={12} h={7} sw={1.2}><path d="M1 6l5-5 5 5" /></Ic>
          </Collapse>
        </Ribbon>

        <Workspace>
          <Rail>
            <Ic w={6} h={9} sw={1.3}><path d="M1 1l4 3.500L1 8" /></Ic>
            <RailLabel>Thumbnails</RailLabel>
          </Rail>
          <Canvas>
            <SlideArea>
              <Slide>
                <Chart />
                <ChartButton $top={46}>
                  <Ic w={19} h={19}><path d="M9.500 1v17M1 9.500h17" stroke="#5cb270" strokeWidth="1.3" /></Ic>
                </ChartButton>
                <ChartButton $top={86}>
                  <Ic w={20} h={20}>
                    <path d="M9 11l8-9 2 2-8 9" stroke="#666" fill="#fff" />
                    <path d="M1 18c4 .5 9-.5 10-5l-3-2.500C4 11.500 5 16 1 18z" fill={BLUE} stroke="none" />
                  </Ic>
                </ChartButton>
                <ChartButton $top={127}>
                  <Ic w={19} h={19} sw={1.1}><path d="M1 2h17L11.500 10v8h-4v-8z" stroke="#666" /></Ic>
                </ChartButton>
              </Slide>
            </SlideArea>
            <CanvasScroll>
              <ArrowUp mt={5} />
              <ScrollThumb $h={65} $mt={139} />
              <ArrowDown mt={272} />
              <ScrollArrow $mt={7} width="11" height="12" viewBox="0 0 11 12"><path d="M5.500 0L10 5H1zM5.500 4L11 11H0z" fill="currentColor" /></ScrollArrow>
              <ScrollArrow $mt={6} width="11" height="12" viewBox="0 0 11 12"><path d="M5.500 12L1 7h9zM5.500 8L0 1h11z" fill="currentColor" /></ScrollArrow>
            </CanvasScroll>
          </Canvas>

          <Pane>
            <PaneHeader>
              Format Chart Area
              <PaneIconSlot $w={20} $ml="auto">
                <Ic w={16} h={9} sw={1.2}><path d="M1 1l7 7 7-7" /></Ic>
              </PaneIconSlot>
              <PaneIconSlot $w={50}>
                <Ic w={13} h={13} sw={1.2}><path d="M1 1l11 11M12 1L1 12" /></Ic>
              </PaneIconSlot>
            </PaneHeader>
            <PaneTabs>
              <PaneChevron><Chev c={BLUE} /></PaneChevron>
              <PaneTab $active>Chart Options</PaneTab>
              <PaneTab $ml={26}>Text Options</PaneTab>
            </PaneTabs>
            <PaneIcons>
              <FillTab>
                <svg width="24" height="26" viewBox="0 0 24 26" fill="none">
                  <path d="M2 13l8-8 9 8-8 9z" stroke={RED} strokeWidth="1.2" />
                  <path d="M10 9V2.500h2V9" stroke="#888" />
                  <path d="M15 6c4 1 7 5 8 11-1 2-3 1-3-2 0-2-2-3-3-4z" fill={RED} />
                </svg>
              </FillTab>
              <PlainTab $w={50}>
                <svg width="22" height="24" viewBox="0 0 22 24" fill="none" stroke="#777">
                  <path d="M11 1l10 7-4 11H5L1 8z" fill="#fff" />
                  <path d="M3 22c1-2 1-3 2-3M19 22c-1-2-1-3-2-3" />
                </svg>
              </PlainTab>
              <PlainTab $w={38}>
                <svg width="24" height="24" viewBox="0 0 24 24" fill="none" stroke="#777">
                  <path d="M7 1.500h16M7 0v3M23 0v3M1 7h4M1 23h4M3 7v16" />
                  <rect x="7" y="6" width="16" height="17" rx="1" fill="#666" stroke="none" />
                  <path d="M15 9v11M10 14.500h10" stroke="#fff" />
                </svg>
              </PlainTab>
            </PaneIcons>
            <PaneBody>
              <PaneContent>
                <SectionHead>
                  <Ic w={7} h={10} sw={1.3}><path d="M1 1l4 4-4 4" /></Ic>
                  Fill
                </SectionHead>
                <SectionHead>
                  <Ic w={10} h={7} sw={1.3}><path d="M1 1l4 4 4-4" /></Ic>
                  Border
                </SectionHead>
                <RadioList>
                  <RadioRow><RadioDot /><span><Key>N</Key>o line</span></RadioRow>
                  <RadioRow><RadioDot $on /><span><Key>S</Key>olid line</span></RadioRow>
                  <RadioRow><RadioDot /><span><Key>G</Key>radient line</span></RadioRow>
                  <RadioRow><RadioDot /><span>A<Key>u</Key>tomatic</span></RadioRow>
                </RadioList>
                <Divider />
                <PropRows>
                  <PropRow>
                    <PropLabel><Key>C</Key>olor</PropLabel>
                    <PickButton $w={49} $h={30}>
                      <svg width="19" height="19" viewBox="0 0 19 19" fill="none">
                        <path d="M15 1H1v10h9" stroke="#555" />
                        <path d="M7 11l1-3 7-7 2 2-7 7z" stroke={BLUE} fill="#fff" />
                        <rect x="0" y="14" width="18" height="4" fill="#a8a8a8" />
                      </svg>
                      <Chev />
                    </PickButton>
                  </PropRow>
                  <PropRow>
                    <PropLabel><Key>T</Key>ransparency</PropLabel>
                    <SliderGroup>
                      <Ic w={44} h={11} sw={1}><path d="M.5 0v11" stroke="#555" /><path d="M1 5.500h43" stroke="#777" /></Ic>
                      <SpinBox $w={86} $h={24}>
                        0%
                        <SpinArrows><Up /><Chev c="#444" /></SpinArrows>
                      </SpinBox>
                    </SliderGroup>
                  </PropRow>
                  <PropRow>
                    <PropLabel><Key>W</Key>idth</PropLabel>
                    <SpinBox $w={86} $h={24}>
                      0.75 pt
                      <SpinArrows><Up /><Chev c="#444" /></SpinArrows>
                    </SpinBox>
                  </PropRow>
                  <PropRow>
                    <PropLabel><Key>C</Key>ompound type</PropLabel>
                    <PickButton $w={49} $h={30}>
                      <svg width="19" height="16" viewBox="0 0 19 16">
                        <rect x="0" y="1" width="18" height="3" fill={BLUE} />
                        <rect x="0" y="6" width="18" height="1" fill="#555" />
                        <rect x="0" y="9" width="18" height="3.5" fill={BLUE} />
                        <rect x="0" y="14" width="18" height="1" fill="#555" />
                      </svg>
                      <Chev />
                    </PickButton>
                  </PropRow>
                  <PropRow>
                    <PropLabel><Key>D</Key>ash type</PropLabel>
                    <PickButton $w={49} $h={30}>
                      <svg width="19" height="16" viewBox="0 0 19 16" stroke="#666" fill="none">
                        <path d="M0 1.500h18" />
                        <path d="M0 5.500h18" strokeDasharray="1 1" />
                        <path d="M0 9.500h18" strokeDasharray="2 1" />
                        <path d="M0 13.500h18" strokeDasharray="4 2" />
                      </svg>
                      <Chev />
                    </PickButton>
                  </PropRow>
                  <PropRow>
                    <PropLabel>C<Key>a</Key>p type</PropLabel>
                    <PickButton $w={69} $h={22} $pl={5}>Flat<Chev /></PickButton>
                  </PropRow>
                  <PropRow>
                    <PropLabel><Key>J</Key>oin type</PropLabel>
                    <PickButton $w={67} $h={22} $pl={5}>Round<Chev /></PickButton>
                  </PropRow>
                  <NextCtl />
                </PropRows>
              </PaneContent>
              <PaneScroll>
                <ArrowUp mt={2} />
                <ScrollThumb $h={249} $mt={7} />
                <ArrowDown mt={114} />
              </PaneScroll>
            </PaneBody>
          </Pane>
        </Workspace>

        <StatusBar>
          <StatusItem $w={784}>Slide 3 of 7</StatusItem>
          <StatusItem $w={67}>
            <Ic w={18} h={15}><path d="M6 4l3-3 3 3M0 8h18M0 11h18M0 14h18" /></Ic>
            Notes
          </StatusItem>
          <StatusItem $w={118}>
            <Ic w={16} h={15}><path d="M6 11H1V1h14v4" /><circle cx="10.5" cy="10.5" r="3" strokeWidth="2" /></Ic>
            Display Settings
          </StatusItem>
          <Ic w={9} h={1}><path d="M0 .5h9" /></Ic>
          <ZoomTrack />
          <Ic w={10} h={10}><path d="M5 0v10M0 5h10" /></Ic>
          <StatusItem $w={38} $pl={15}>59%</StatusItem>
          <Slot $w={44}>
            <Ic w={16} h={15}><rect x="5" y="4" width="6" height="7" /><path d="M3 5L1 7.500 3 10M13 5l2 2.500L13 10M6 2.500L8 .5l2 2M6 12.500l2 2 2-2" /></Ic>
          </Slot>
        </StatusBar>
      </Body>
    </Window>
  );
}
